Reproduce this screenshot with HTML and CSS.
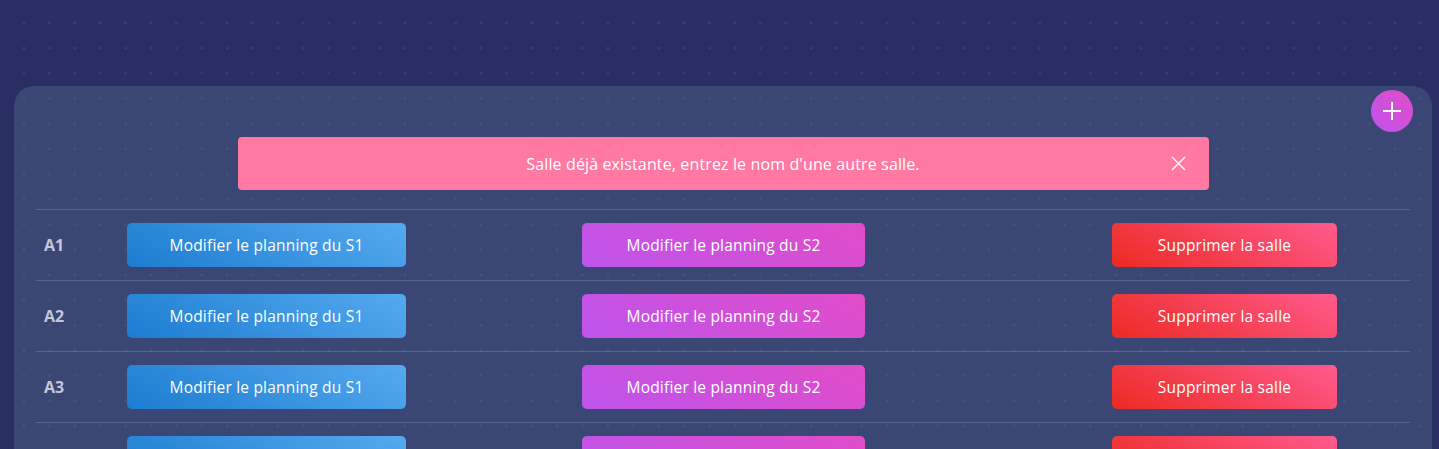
FILE: index.html
```html
<!DOCTYPE html>
<html lang="fr">
<head>
<meta charset="utf-8">
<title>Salles</title>
<link rel="stylesheet" href="styles.css">
</head>
<body>
<main class="page">
  <section class="card">
    <button class="add-btn" aria-label="Ajouter une salle">
      <svg width="18" height="18" viewBox="0 0 18 18"><path d="M9 0V18M0 9H18" stroke="#fff" stroke-width="2"/></svg>
    </button>
    <div class="alert">
      <span class="alert-text">Salle déjà existante, entrez le nom d'une autre salle.</span>
      <button class="alert-close" aria-label="Fermer">
        <svg width="15" height="15" viewBox="0 0 15 15"><path d="M1 1L14 14M14 1L1 14" stroke="#fff" stroke-width="1.4"/></svg>
      </button>
    </div>
    <div class="table">
      <div class="row">
        <div class="cell name">A1</div>
        <div class="cell"><a class="btn btn-blue">Modifier le planning du S1</a></div>
        <div class="cell"><a class="btn btn-purple">Modifier le planning du S2</a></div>
        <div class="cell"><a class="btn btn-red">Supprimer la salle</a></div>
      </div>
      <div class="row">
        <div class="cell name">A2</div>
        <div class="cell"><a class="btn btn-blue">Modifier le planning du S1</a></div>
        <div class="cell"><a class="btn btn-purple">Modifier le planning du S2</a></div>
        <div class="cell"><a class="btn btn-red">Supprimer la salle</a></div>
      </div>
      <div class="row">
        <div class="cell name">A3</div>
        <div class="cell"><a class="btn btn-blue">Modifier le planning du S1</a></div>
        <div class="cell"><a class="btn btn-purple">Modifier le planning du S2</a></div>
        <div class="cell"><a class="btn btn-red">Supprimer la salle</a></div>
      </div>
      <div class="row">
        <div class="cell name">A4</div>
        <div class="cell"><a class="btn btn-blue">Modifier le planning du S1</a></div>
        <div class="cell"><a class="btn btn-purple">Modifier le planning du S2</a></div>
        <div class="cell"><a class="btn btn-red">Supprimer la salle</a></div>
      </div>
    </div>
  </section>
</main>
</body>
</html>
```
FILE: styles.css
```css
* { box-sizing: border-box; }
html, body { margin: 0; height: 100%; overflow: hidden; }
body {
  background-color: #292f62;
  background-image: radial-gradient(circle, rgba(255,255,255,0.08) 1.2px, transparent 1.7px);
  background-size: 25.4px 25.2px;
  background-position: 11.3px 10.4px;
  background-attachment: fixed;
  font-family: "Open Sans", "Liberation Sans", sans-serif;
  color: #fff;
}
.page { padding: 86px 7px 0 14px; }
.card {
  position: relative;
  background-color: rgba(98, 127, 155, 0.3);
  border-radius: 20px 20px 0 0;
  padding: 51px 22px 0 22px;
  min-height: 400px;
}
.add-btn {
  position: absolute;
  top: 4px;
  right: 19px;
  width: 42px;
  height: 42px;
  border-radius: 50%;
  border: none;
  padding: 0;
  display: flex;
  align-items: center;
  justify-content: center;
  background: linear-gradient(45deg, #bd54ec 0%, #e24cc8 100%);
}
.alert {
  position: relative;
  width: 971px;
  height: 53px;
  margin: 0 auto 19px;
  background: #ff79a2;
  border-radius: 4px;
  display: flex;
  align-items: center;
  justify-content: center;
  font-size: 16px;
  letter-spacing: 0.13px;
  color: #fff;
}
.alert-close {
  position: absolute;
  right: 23px;
  top: 19px;
  background: none;
  border: none;
  padding: 0;
  width: 15px;
  height: 15px;
  display: flex;
}
.table { display: flex; flex-direction: column; }
.row {
  display: grid;
  grid-template-columns: 83px 455px 530px 307px;
  border-top: 1px solid rgba(140, 155, 200, 0.35);
}
.cell {
  padding: 13px 8px;
  display: flex;
  align-items: center;
}
.name {
  font-weight: 700;
  font-size: 16px;
  color: #c4c7da;
}
.btn {
  display: flex;
  align-items: center;
  justify-content: center;
  height: 44px;
  border-radius: 5px;
  color: #fff;
  font-size: 15.5px;
  letter-spacing: 0.2px;
}
.btn-blue { width: 279px; background: linear-gradient(30deg, #1c7cd0 0%, #55aaef 100%); }
.btn-purple { width: 283px; background: linear-gradient(30deg, #bd54ec 0%, #e24cc8 100%); }
.btn-red { width: 225px; background: linear-gradient(30deg, #ec2a22 0%, #ff5a8e 100%); }
```
